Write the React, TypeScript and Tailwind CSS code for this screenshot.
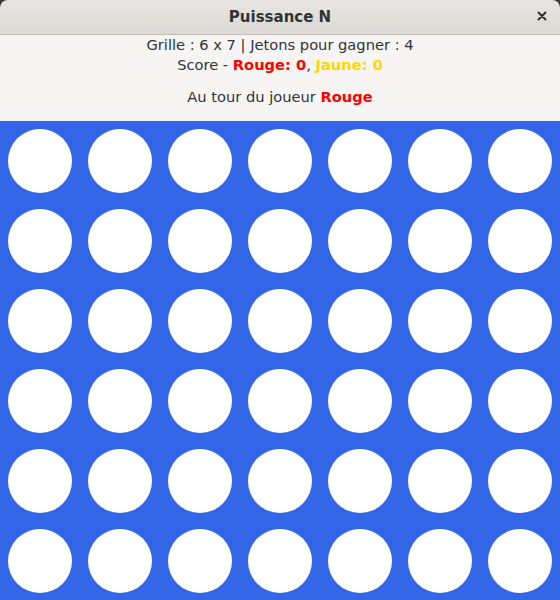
import React from "react";

const ROWS = 6;
const COLS = 7;

const App: React.FC = () => {
  return (
    <div className="w-[560px] h-[600px] overflow-hidden bg-[#3b3b3b] font-['DejaVu_Sans',sans-serif] text-[#2e3436] flex flex-col">
      {/* Title bar */}
      <header className="relative h-[35px] shrink-0 rounded-t-[8px] bg-gradient-to-b from-[#e8e6e3] to-[#dcd8d4] border-b border-[#c0bbb5] flex items-center justify-center">
        <h1 className="text-[15px] font-bold text-[#2e3436]">Puissance N</h1>
        <button className="absolute right-[10px] top-[8px] w-[16px] h-[16px] flex items-center justify-center">
          <svg width="10" height="10" viewBox="0 0 10 10">
            <path d="M1.5 1.5 L8.5 8.5 M8.5 1.5 L1.5 8.5" stroke="#2e3436" strokeWidth="2" strokeLinecap="round" />
          </svg>
        </button>
      </header>

      {/* Info */}
      <div className="flex flex-col items-center bg-[#f6f5f4] text-[14.67px] leading-[20px] pb-[14px]">
        <p>Grille : 6 x 7 | Jetons pour gagner : 4</p>
        <p>
          Score - <span className="font-bold text-[#ff0000]">Rouge: 0</span>,{" "}
          <span className="font-bold text-[#ffd700]">Jaune: 0</span>
        </p>
        <p className="mt-[12px]">
          Au tour du joueur <span className="font-bold text-[#ff0000]">Rouge</span>
        </p>
      </div>

      {/* Board */}
      <div className="bg-[#3366e6] grid grid-cols-7 flex-1">
        {Array.from({ length: ROWS * COLS }).map((_, i) => (
          <div key={i} className="w-[80px] h-[80px] flex items-center justify-center">
            <div className="w-[64px] h-[64px] rounded-full bg-white" />
          </div>
        ))}
      </div>
    </div>
  );
};

export default App;
